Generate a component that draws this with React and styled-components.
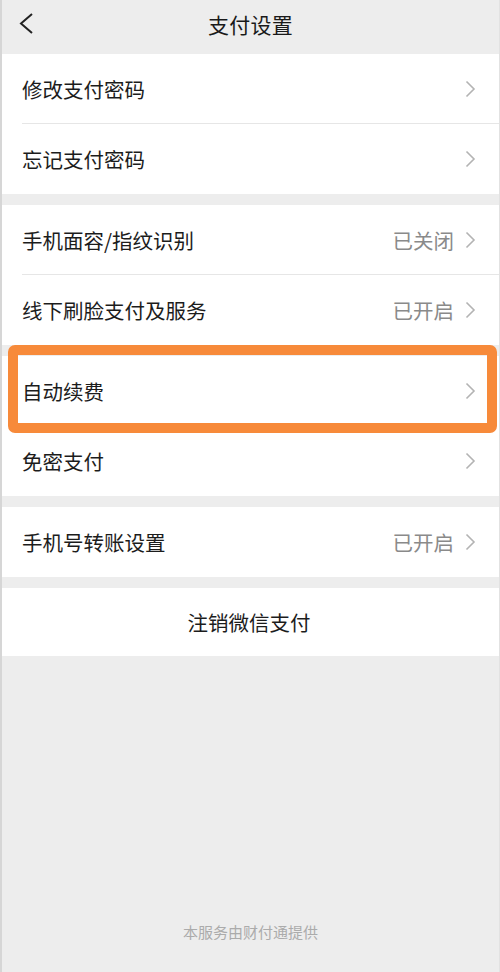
import React from "react";
import styled, { createGlobalStyle } from "styled-components";

const Global = createGlobalStyle`
  html, body { margin: 0; padding: 0; background: #ededed; }
  body { font-family: "Noto Sans CJK SC", "Noto Sans", sans-serif; }
  * { box-sizing: border-box; }
`;

const Page = styled.div`
  min-height: 972px;
  display: flex;
  flex-direction: column;
  background: #ededed;
  border-left: 2px solid #d6d6d6;
  border-right: 1px solid #e2e2e2;
`;

const Header = styled.div`
  position: relative;
  height: 54px;
  padding-bottom: 6px;
  display: flex;
  align-items: center;
  justify-content: center;
`;

const BackButton = styled.div`
  position: absolute;
  left: 16px;
  top: 13px;
  width: 16px;
  height: 21px;
  display: flex;
`;

const Title = styled.div`
  font-size: 21px;
  color: #1a1a1a;
  line-height: 1;
  letter-spacing: 0.3px;
`;

const Group = styled.div`
  background: #fff;
  margin-top: ${(p) => (p.$first ? 0 : 11)}px;
`;

const Row = styled.div`
  position: relative;
  height: ${(p) => p.$h || 70}px;
  display: flex;
  align-items: center;
  justify-content: ${(p) => (p.$center ? "center" : "flex-start")};
  padding: 0 23px 0 20px;
  &::after {
    content: "";
    display: ${(p) => (p.$divider ? "block" : "none")};
    position: absolute;
    left: 20px;
    right: 0;
    bottom: 0;
    height: 1px;
    background: #e6e6e6;
  }
`;

const Label = styled.div`
  font-size: 20.5px;
  color: #1c1c1c;
  line-height: 1;
  flex: ${(p) => (p.$center ? "none" : 1)};
`;

const Value = styled.div`
  font-size: 20.5px;
  color: #8a8a8a;
  line-height: 1;
  margin-right: 11px;
`;

const Highlight = styled.div`
  position: absolute;
  left: 6px;
  right: 2px;
  top: -11px;
  bottom: -7px;
  border: 10px solid #f78a3a;
  border-radius: 7px;
  pointer-events: none;
`;

const Footer = styled.div`
  margin-top: auto;
  padding-bottom: 30px;
  text-align: center;
  font-size: 15px;
  line-height: 20px;
  color: #ababab;
`;

const Chevron = () => (
  <svg width="11" height="18" viewBox="0 0 11 18" fill="none">
    <path d="M1.5 1.5 L9 9 L1.5 16.5" stroke="#b3b3b3" strokeWidth="1.6" strokeLinejoin="miter" />
  </svg>
);

const Back = () => (
  <svg width="16" height="21" viewBox="0 0 16 21" fill="none">
    <path d="M14 1 L3 10.5 L14 20" stroke="#222" strokeWidth="2" />
  </svg>
);

const Item = ({ label, value, divider, highlight }) => (
  <Row $divider={divider}>
    <Label>{label}</Label>
    {value && <Value>{value}</Value>}
    <Chevron />
    {highlight && <Highlight />}
  </Row>
);

export default function App() {
  return (
    <>
      <Global />
      <Page>
        <Header>
          <BackButton>
            <Back />
          </BackButton>
          <Title>支付设置</Title>
        </Header>
        <Group $first>
          <Item label="修改支付密码" divider />
          <Item label="忘记支付密码" />
        </Group>
        <Group>
          <Item label="手机面容/指纹识别" value="已关闭" divider />
          <Item label="线下刷脸支付及服务" value="已开启" />
        </Group>
        <Group>
          <Item label="自动续费" highlight />
          <Item label="免密支付" />
        </Group>
        <Group>
          <Item label="手机号转账设置" value="已开启" />
        </Group>
        <Group>
          <Row $center $h={68}>
            <Label $center>注销微信支付</Label>
          </Row>
        </Group>
        <Footer>本服务由财付通提供</Footer>
      </Page>
    </>
  );
}
